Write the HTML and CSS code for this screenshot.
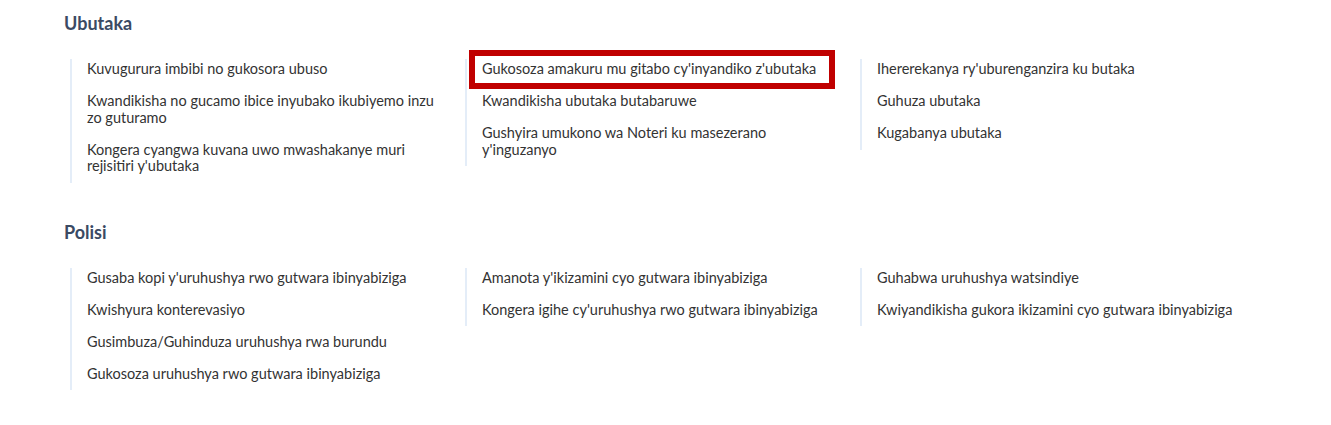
FILE: index.html
```html
<!DOCTYPE html>
<html lang="rw">

<head>
    <meta charset="UTF-8">
    <meta name="viewport" content="width=device-width, initial-scale=1.0">
    <title>Serivisi</title>
    <link rel="stylesheet" href="styles.css">
</head>

<body>

    <div class="section">
        <h2>Ubutaka</h2>
        <div class="columns">
            <ul>
                <li>Kuvugurura imbibi no gukosora ubuso</li>
                <li>Kwandikisha no gucamo ibice inyubako ikubiyemo inzu zo guturamo</li>
                <li>Kongera cyangwa kuvana uwo mwashakanye muri rejisitiri y'ubutaka</li>
            </ul>
            <ul>
                <li class="marked">Gukosoza amakuru mu gitabo cy'inyandiko z'ubutaka</li>
                <li>Kwandikisha ubutaka butabaruwe</li>
                <li>Gushyira umukono wa Noteri ku masezerano y'inguzanyo</li>
            </ul>
            <ul>
                <li>Ihererekanya ry'uburenganzira ku butaka</li>
                <li>Guhuza ubutaka</li>
                <li>Kugabanya ubutaka</li>
            </ul>
        </div>
    </div>

    <div class="section">
        <h2>Polisi</h2>
        <div class="columns">
            <ul>
                <li>Gusaba kopi y'uruhushya rwo gutwara ibinyabiziga</li>
                <li>Kwishyura konterevasiyo</li>
                <li>Gusimbuza/Guhinduza uruhushya rwa burundu</li>
                <li>Gukosoza uruhushya rwo gutwara ibinyabiziga</li>
            </ul>
            <ul>
                <li>Amanota y'ikizamini cyo gutwara ibinyabiziga</li>
                <li>Kongera igihe cy'uruhushya rwo gutwara ibinyabiziga</li>
            </ul>
            <ul>
                <li>Guhabwa uruhushya watsindiye</li>
                <li>Kwiyandikisha gukora ikizamini cyo gutwara ibinyabiziga</li>
            </ul>
        </div>
    </div>

</body>

</html>
```

FILE: styles.css
```css
body {
    font-family: Lato, "Open Sans", sans-serif;
    margin: 0;
    padding: 12px 0 0 64px;
    background-color: #fff;
    color: #333;
}

.section {
    margin-bottom: 38px;
}

h2 {
    font-size: 18px;
    line-height: 22px;
    font-weight: 700;
    color: #3b4a63;
    margin: 0 0 25px;
}

.columns {
    display: grid;
    grid-template-columns: repeat(3, 395px);
    align-items: start;
    margin-left: 6px;
}

ul {
    list-style: none;
    margin: 0;
    padding: 2px 21px 8px 15px;
    border-left: 2px solid #e4edf8;
}

li {
    font-size: 14.5px;
    line-height: 16.5px;
    margin-bottom: 15.5px;
    position: relative;
}

li:last-child {
    margin-bottom: 0;
}

/* cadre rouge qui signale l'élément */
.marked::after {
    content: "";
    position: absolute;
    left: -13px;
    top: -11px;
    width: 366px;
    height: 39px;
    border: 6px solid #c00000;
    box-sizing: border-box;
}
```
